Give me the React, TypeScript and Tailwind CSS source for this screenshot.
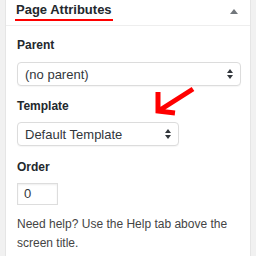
import React from "react";

function UpDown() {
  return (
    <svg width="8" height="12" viewBox="0 0 8 12" className="shrink-0">
      <path d="M4 1 L7 5 L1 5 Z" fill="#32373c" />
      <path d="M4 11 L7 7 L1 7 Z" fill="#32373c" />
    </svg>
  );
}

function Select({ label, width }: { label: string; width: string }) {
  return (
    <div
      className={`${width} h-[24px] flex items-center justify-between rounded-[4px] border border-[#dcdcdc] bg-white pl-[7px] pr-[6px] shadow-[0_1px_1px_rgba(0,0,0,0.04)]`}
    >
      <span className="text-[13px] leading-none text-[#32373c]">{label}</span>
      <UpDown />
    </div>
  );
}

export default function App() {
  return (
    <div
      className="w-[256px] h-[256px] overflow-hidden bg-[#f1f1f1]"
      style={{ fontFamily: '"Liberation Sans", Arial, sans-serif' }}
    >
      <div className="relative ml-[5px] w-[246px] h-full bg-white border-x border-[#e5e5e5]">
        {/* header */}
        <div className="h-[26px] border-b border-[#eeeeee] flex items-start justify-between pl-[9px] pr-[12px]">
          <span className="mt-[2px] px-[1px] pb-[1px] text-[13px] leading-[16px] font-bold text-[#23282d] border-b-[2px] border-[#ff0000]">
            Page Attributes
          </span>
          <svg width="8" height="6" viewBox="0 0 8 6" className="mt-[9px]">
            <path d="M4 0 L8 5 L0 5 Z" fill="#72777c" />
          </svg>
        </div>

        {/* body */}
        <div className="px-[11px] pt-[11px] text-[#23282d]">
          <div className="text-[12px] leading-[16px] font-bold">Parent</div>
          <div className="mt-[9px]">
            <Select label="(no parent)" width="w-[224px]" />
          </div>

          <div className="mt-[12px] text-[12px] leading-[16px] font-bold">Template</div>
          <div className="mt-[8px]">
            <Select label="Default Template" width="w-[162px]" />
          </div>

          <div className="mt-[13px] text-[12px] leading-[16px] font-bold">Order</div>
          <div className="mt-[8px] w-[41px] h-[22px] border border-[#dddddd] flex items-center px-[6px] text-[13px] text-[#32373c] shadow-[inset_0_1px_2px_rgba(0,0,0,0.07)]">
            0
          </div>

          <p className="mt-[10px] text-[12px] leading-[19px] text-[#444444]">
            Need help? Use the Help tab above the
            <br />
            screen title.
          </p>
        </div>

        {/* annotation arrow */}
        <svg
          width="50"
          height="40"
          viewBox="0 0 50 40"
          className="absolute left-[140px] top-[80px]"
        >
          <path
            d="M47 9 L14 30 M12 12 L12 31 L29 33"
            fill="none"
            stroke="#ff0000"
            strokeWidth="5"
            strokeLinejoin="miter"
          />
        </svg>
      </div>
    </div>
  );
}
